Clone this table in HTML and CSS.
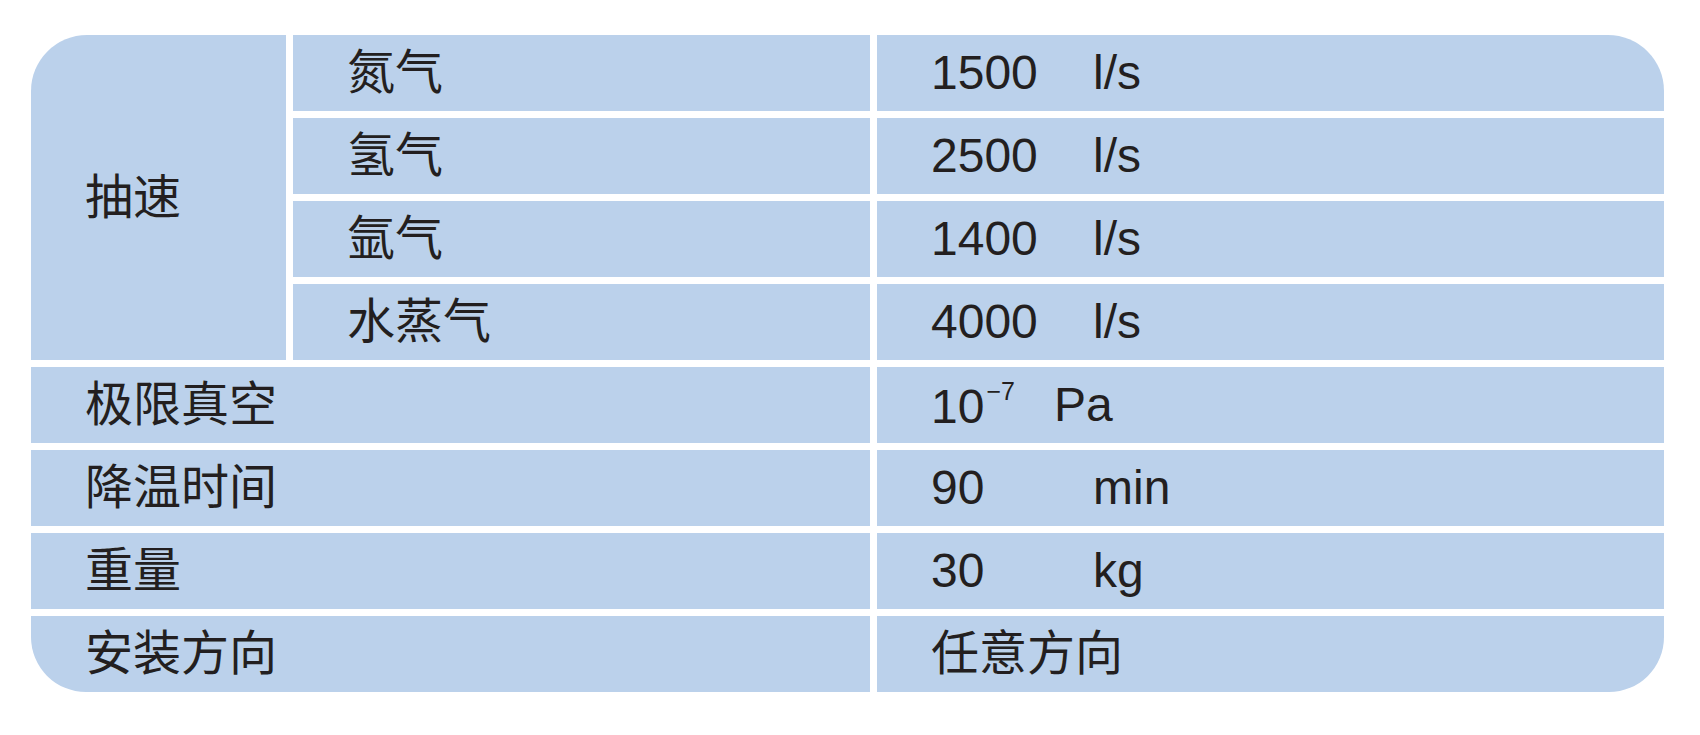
FILE: index.html
```html
<!DOCTYPE html>
<html lang="zh-CN">
<head>
<meta charset="utf-8">
<title>参数表</title>
<link rel="stylesheet" href="styles.css">
</head>
<body>
<div class="page">
  <div class="spec">
    <div class="cell group tl">抽速</div>
    <div class="cell">氮气</div>
    <div class="cell tr"><span class="num">1500</span><span class="unit">l/s</span></div>
    <div class="cell">氢气</div>
    <div class="cell"><span class="num">2500</span><span class="unit">l/s</span></div>
    <div class="cell">氩气</div>
    <div class="cell"><span class="num">1400</span><span class="unit">l/s</span></div>
    <div class="cell">水蒸气</div>
    <div class="cell"><span class="num">4000</span><span class="unit">l/s</span></div>

    <div class="cell wide">极限真空</div>
    <div class="cell"><span class="num short">10<span class="sup">−7</span></span><span class="unit">Pa</span></div>
    <div class="cell wide">降温时间</div>
    <div class="cell"><span class="num">90</span><span class="unit">min</span></div>
    <div class="cell wide">重量</div>
    <div class="cell"><span class="num">30</span><span class="unit">kg</span></div>
    <div class="cell wide bl">安装方向</div>
    <div class="cell br">任意方向</div>
  </div>
</div>
</body>
</html>
```

FILE: styles.css
```css
html, body {
  margin: 0;
  padding: 0;
  background: #ffffff;
}

body {
  font-family: "Liberation Sans", "Noto Sans CJK SC", sans-serif;
  color: #231f20;
}

.page {
  padding: 35px 0 0 31px;
}

.spec {
  display: grid;
  grid-template-columns: 255px 577px 787px;
  grid-auto-rows: 76px;
  column-gap: 7px;
  row-gap: 7px;
  width: 1633px;
}

.cell {
  background: #bbd1eb;
  display: flex;
  align-items: center;
  padding-left: 54px;
  font-size: 48px;
  line-height: 1;
  white-space: nowrap;
}

.group {
  grid-row: span 4;
}

.wide {
  grid-column: span 2;
}

.tl { border-top-left-radius: 56px; }
.tr { border-top-right-radius: 56px; }
.bl { border-bottom-left-radius: 55px; }
.br { border-bottom-right-radius: 55px; }

.num {
  display: inline-block;
  width: 162px;
}

.num.short {
  width: 123px;
}

.sup {
  font-size: 25px;
  vertical-align: 23px;
  margin-left: 2px;
}
```
